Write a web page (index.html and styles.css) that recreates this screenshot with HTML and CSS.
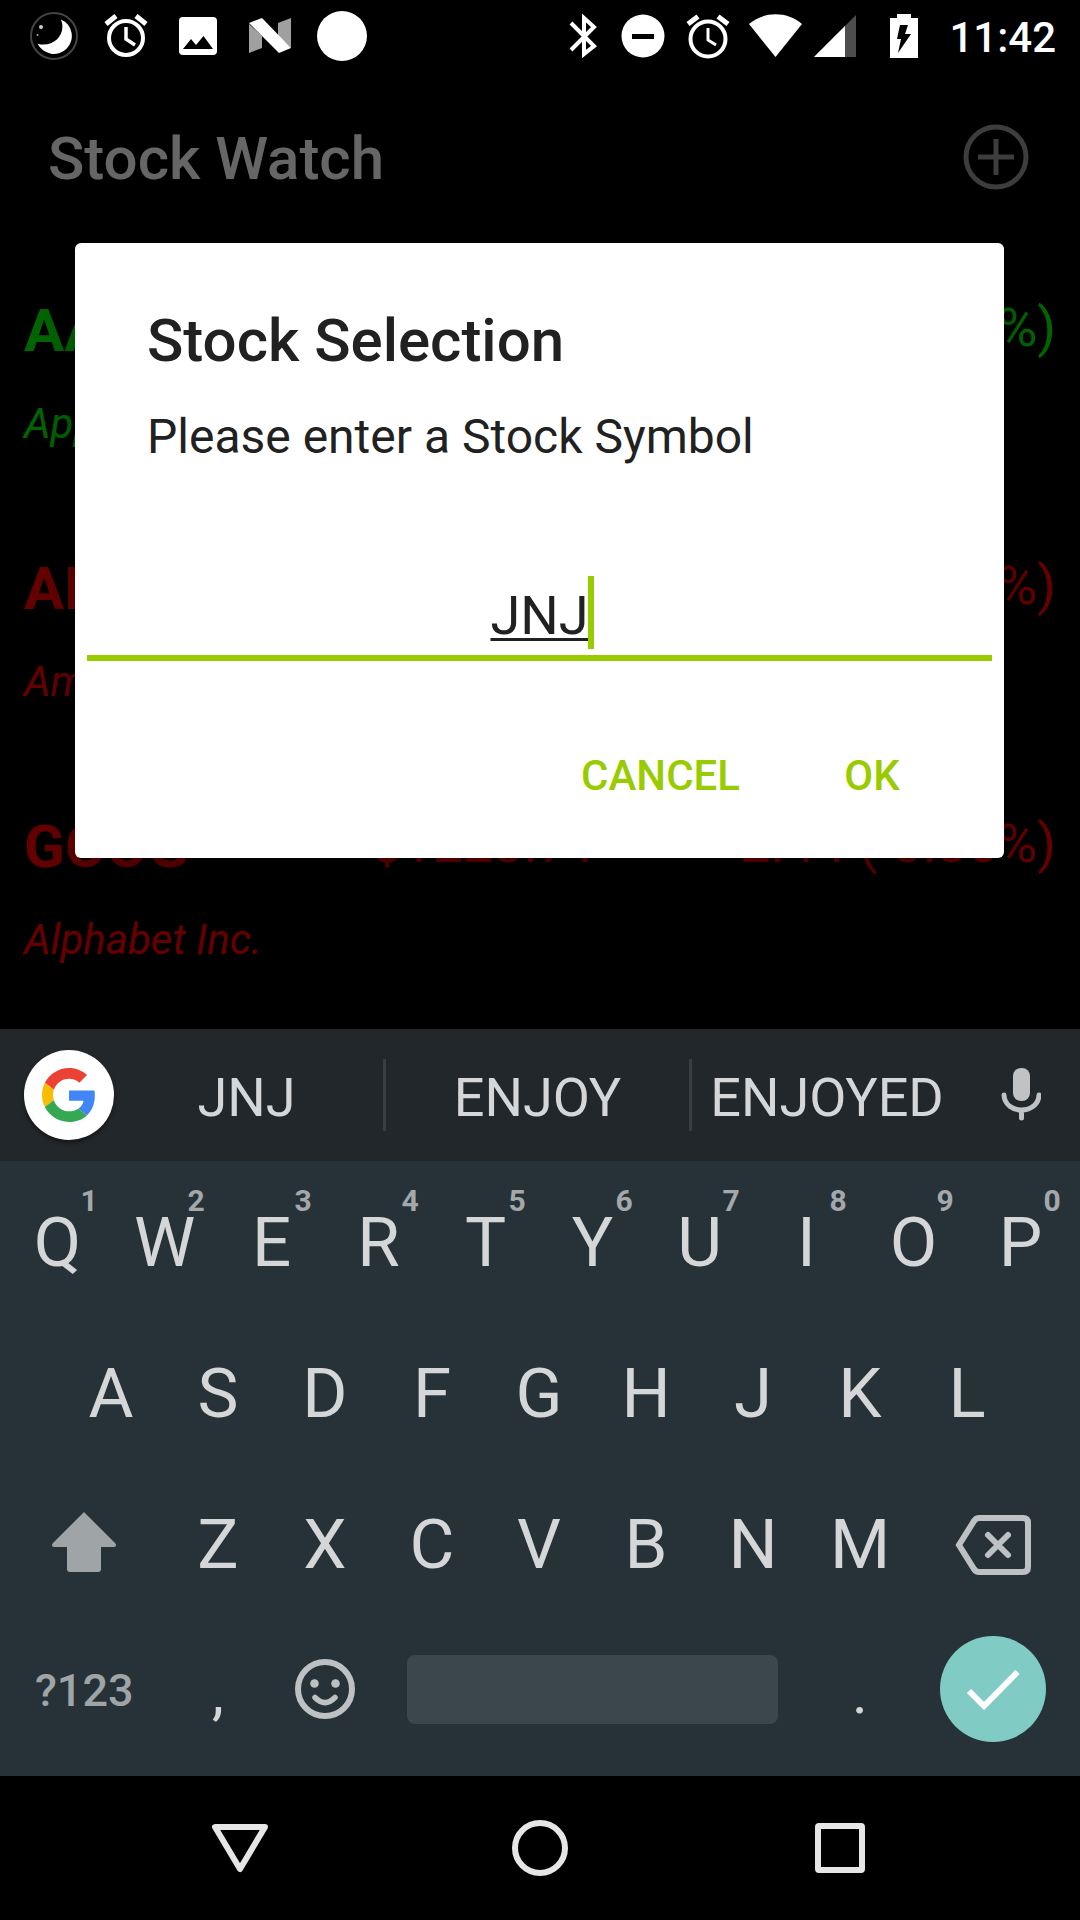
FILE: index.html
```html
<!DOCTYPE html>
<html lang="en">
<head>
<meta charset="utf-8">
<meta name="viewport" content="width=device-width, initial-scale=1">
<title>Stock Watch</title>
<link rel="stylesheet" href="styles.css">
</head>
<body>
<div class="screen">
  <header class="status">
    <div class="notifications">
      <svg width="50" height="50" viewBox="0 0 50 50"><circle cx="25" cy="25" r="23" fill="none" stroke="#444" stroke-width="2"/><path d="M32 8.400A18 18 0 1 1 8.600 32.700C24 37 38 24 32 8.400Z" fill="#fff"/><circle cx="12" cy="16" r="2" fill="#ccc"/><circle cx="8.500" cy="24" r="1" fill="#aaa"/></svg>
      <svg width="50" height="50" viewBox="0 0 50 50" fill="none" stroke="#fff"><circle cx="25" cy="27" r="17" stroke-width="4"/><path d="M25 16V28L34 34" stroke-width="3.500"/><path d="M5 13L15 5M45 13L35 5" stroke-width="5"/></svg>
      <svg width="50" height="50" viewBox="0 0 50 50"><rect x="6" y="6" width="38" height="38" rx="4" fill="#fff"/><path d="M10 38L18 28L23 34L30.500 25L40 38Z"/></svg>
      <svg width="50" height="50" viewBox="0 0 50 50"><path d="M4 13L17 25V37L4 42ZM46 7V37L33 25V12Z" fill="#a0a0a0"/><path d="M4 12L17 7L46 37L34 42Z" fill="#fff"/></svg>
      <svg width="50" height="50" viewBox="0 0 50 50"><circle cx="25" cy="25" r="25" fill="#fff"/></svg>
    </div>
    <div class="system">
      <svg width="56" height="72" viewBox="0 0 56 72" fill="none" stroke="#fff" stroke-width="4"><path d="M16 23L39 46L29 54V18L39 27L16 50"/></svg>
      <svg width="64" height="72" viewBox="0 0 64 72"><circle cx="32" cy="36" r="21.500" fill="#fff"/><path d="M21 36.500H43" stroke="#000" stroke-width="5"/></svg>
      <svg width="66" height="72" viewBox="0 0 66 72" fill="none" stroke="#fff"><circle cx="33" cy="39" r="17.500" stroke-width="4"/><path d="M33 28V40L41 45" stroke-width="3"/><path d="M13 24L23 16.500M53 24L43 16.500" stroke-width="5"/></svg>
      <svg width="68" height="72" viewBox="0 0 68 72"><path d="M8 24C23 11 46 11 61 24L34.500 57Z" fill="#fff"/></svg>
      <svg width="54" height="72" viewBox="0 0 54 72"><path d="M5 57L47 15V57Z" fill="#4d4d4d"/><path d="M5 57L36 26V57Z" fill="#fff"/></svg>
      <svg width="80" height="72" viewBox="0 0 80 72"><path d="M27 18H34V14H48V18H55V58H27Z" fill="#fff"/><path d="M37 25H45L42 34H48L35 53L38 39H34Z"/></svg>
      <time class="clock">11:42</time>
    </div>
  </header>

  <main class="app">
    <div class="app-bar">
      <h1>Stock Watch</h1>
      <button class="add" aria-label="Add stock"><svg width="66" height="66" viewBox="0 0 66 66" fill="none" stroke="#999" stroke-width="5"><circle cx="33" cy="33" r="30"/><path d="M33 15V51M15 33H51"/></svg></button>
    </div>
    <ul class="stocks">
      <li class="stock up"><b class="symbol">AAPL</b><span>$208.87</span><span>1.38 (0.67%)</span><i class="company">Apple Inc.</i></li>
      <li class="stock down"><b class="symbol">AMZN</b><span>$1886.52</span><span>-12.00 (-0.63%)</span><i class="company">Amazon.com Inc.</i></li>
      <li class="stock down"><b class="symbol">GOOG</b><span>$1223.71</span><span>-2.44 (-0.36%)</span><i class="company">Alphabet Inc.</i></li>
    </ul>

    <div class="scrim">
      <form class="dialog" role="dialog" aria-labelledby="dialog-title">
        <h2 id="dialog-title">Stock Selection</h2>
        <label for="symbol">Please enter a Stock Symbol</label>
        <div class="field">
          <input id="symbol" type="text" value="JNJ" autocomplete="off" spellcheck="false">
          <span class="caret"></span>
        </div>
        <div class="actions">
          <button type="button">CANCEL</button>
          <button type="button">OK</button>
        </div>
      </form>
    </div>
  </main>

  <section class="keyboard" aria-label="Keyboard">
    <div class="suggestions">
      <button class="google" aria-label="Google search"><svg width="54" height="54" viewBox="0 0 48 48"><path fill="#ea4335" d="M24 9.500c3.540 0 6.710 1.220 9.210 3.600l6.850-6.850C35.900 2.380 30.470 0 24 0 14.620 0 6.510 5.380 2.560 13.220l7.980 6.190C12.430 13.720 17.740 9.500 24 9.500z"/><path fill="#4285f4" d="M46.980 24.550c0-1.570-.15-3.090-.38-4.550H24v9.020h12.940c-.58 2.960-2.260 5.480-4.780 7.180l7.730 6c4.510-4.180 7.090-10.360 7.090-17.650z"/><path fill="#fbbc05" d="M10.530 28.590c-.48-1.450-.76-2.990-.76-4.590s.27-3.140.76-4.590l-7.980-6.190C.92 16.460 0 20.120 0 24c0 3.880.92 7.540 2.560 10.780l7.970-6.190z"/><path fill="#34a853" d="M24 48c6.480 0 11.930-2.130 15.890-5.810l-7.730-6c-2.150 1.450-4.920 2.300-8.160 2.300-6.260 0-11.570-4.220-13.470-9.910l-7.980 6.190C6.510 42.620 14.620 48 24 48z"/></svg></button>
      <button class="word word-first">JNJ</button>
      <button class="word word-middle">ENJOY</button>
      <button class="word">ENJOYED</button>
      <button class="mic" aria-label="Voice input"><svg width="40" height="54" viewBox="0 0 40 54"><rect x="12" y="0" width="17" height="33" rx="8" fill="#c0c2c3"/><path d="M3 27C4 47 37 47 38 27M20.500 42V50" fill="none" stroke="#c0c2c3" stroke-width="5" stroke-linecap="round"/></svg></button>
    </div>
    <div class="keys">
      <div class="row row-top">
        <button>Q<small>1</small></button><button>W<small>2</small></button><button>E<small>3</small></button><button>R<small>4</small></button><button>T<small>5</small></button><button>Y<small>6</small></button><button>U<small>7</small></button><button>I<small>8</small></button><button>O<small>9</small></button><button>P<small>0</small></button>
      </div>
      <div class="row row-home">
        <button>A</button><button>S</button><button>D</button><button>F</button><button>G</button><button>H</button><button>J</button><button>K</button><button>L</button>
      </div>
      <div class="row row-shift">
        <button aria-label="Shift"><svg width="64" height="66" viewBox="0 0 64 66"><path d="M32 0L63 31Q66 35 61 35H49V57Q49 60 46 60H18Q15 60 15 57V35H3Q-2 35 1 31Z" fill="#9fa4a6"/></svg></button>
        <button>Z</button><button>X</button><button>C</button><button>V</button><button>B</button><button>N</button><button>M</button>
        <button class="edge" aria-label="Backspace"><svg width="76" height="60" viewBox="0 0 76 60" fill="none" stroke="#bdc1c3" stroke-width="6"><path d="M24 3H68Q73 3 73 8V52Q73 57 68 57H24Q21 57 19 54L4 30L19 6Q21 3 24 3Z"/><path d="M33 20L53 40M53 20L33 40" stroke-linecap="round"/></svg></button>
      </div>
      <div class="row row-bottom">
        <button class="mode">?123</button>
        <button class="mark">,</button>
        <button aria-label="Emoji"><svg width="60" height="60" viewBox="0 0 60 60"><circle cx="30" cy="30" r="27" fill="none" stroke="#bdc1c3" stroke-width="6"/><circle cx="19.500" cy="24.500" r="4.300" fill="#bdc1c3"/><circle cx="40.500" cy="24.500" r="4.300" fill="#bdc1c3"/><path d="M20 38.500Q30 48.500 40 38.500" fill="none" stroke="#bdc1c3" stroke-width="5.500" stroke-linecap="round"/></svg></button>
        <button class="space" aria-label="Space"><span></span></button>
        <button class="mark">.</button>
        <button class="edge" aria-label="Done"><svg width="106" height="106" viewBox="0 0 106 106"><circle cx="53" cy="53" r="53" fill="#80cbc4"/><path d="M29 55L44 70L77.500 36" fill="none" stroke="#fff" stroke-width="6"/></svg></button>
      </div>
    </div>
  </section>

  <nav class="nav">
    <button aria-label="Back"><svg width="60" height="60" viewBox="0 0 60 60"><path d="M5 9H55L30 51Z" fill="none" stroke="#e6e6e6" stroke-width="6" stroke-linejoin="round"/></svg></button>
    <button aria-label="Home"><svg width="60" height="60" viewBox="0 0 60 60"><circle cx="30" cy="30" r="25" fill="none" stroke="#e6e6e6" stroke-width="6"/></svg></button>
    <button aria-label="Recent apps"><svg width="60" height="60" viewBox="0 0 60 60"><rect x="8" y="8" width="44" height="44" rx="1" fill="none" stroke="#e6e6e6" stroke-width="6"/></svg></button>
  </nav>
</div>
</body>
</html>
```
FILE: styles.css
```css
* { box-sizing: border-box; }

body {
  margin: 0;
  background: #000;
  font-family: Roboto, "Liberation Sans", sans-serif;
}

h1, h2 { margin: 0; font-size: 60px; line-height: 70px; font-weight: 500; }

button {
  margin: 0;
  padding: 0;
  border: 0;
  background: none;
  color: inherit;
  font: inherit;
}

svg { display: block; flex: none; }

.screen { display: flex; flex-direction: column; min-height: 100vh; }

/* Status bar */
.status {
  display: flex;
  justify-content: space-between;
  height: 72px;
  padding: 0 24px 0 29px;
  color: #fff;
}
.notifications { display: flex; align-items: center; gap: 22px; }
.system { display: flex; align-items: center; }
.clock { padding: 4px 0 0 6px; font-size: 42px; line-height: 50px; font-weight: 500; }

/* App */
.app { position: relative; flex: 1; }
.app-bar {
  display: flex;
  align-items: center;
  justify-content: space-between;
  height: 168px;
  padding: 2px 36px 0 48px;
  color: #fff;
}
.app-bar h1 { padding-top: 3px; }
.add { display: grid; place-items: center; width: 96px; height: 96px; }

.stocks { margin: 0; padding: 0; list-style: none; }
.stock {
  display: grid;
  grid-template-columns: 348px 1fr auto;
  row-gap: 33px;
  padding: 56px 24px 50px;
  font-size: 54px;
  line-height: 63px;
}
.symbol { font-size: 60px; line-height: 70px; }
.company { grid-column: 1 / -1; font-size: 42px; line-height: 49px; }
.up { color: #0f0; }
.down { color: #f00; }

/* Dialog */
.scrim {
  position: absolute;
  inset: 0;
  display: flex;
  align-items: center;
  padding: 0 76px 0 75px;
  background: rgba(0, 0, 0, .6);
}
.dialog {
  flex: 1;
  padding: 63px 12px 29px;
  border-radius: 6px;
  background: #fff;
  box-shadow: 0 24px 48px rgba(0, 0, 0, .3);
  color: #212121;
}
.dialog h2 { padding: 0 60px; }
.dialog label {
  display: block;
  margin-top: 33px;
  padding: 0 60px;
  font-size: 48px;
  line-height: 56px;
}
.field { position: relative; margin-top: 111px; }
.field input {
  display: block;
  width: 100%;
  height: 85px;
  padding: 0;
  border: 0;
  border-bottom: 6px solid #9c0;
  border-radius: 0;
  outline: 0;
  background: none;
  color: inherit;
  font: inherit;
  font-size: 54px;
  text-align: center;
  text-decoration: underline 3px;
  text-underline-offset: 4px;
  text-decoration-skip-ink: none;
}
.caret {
  position: absolute;
  top: 0;
  left: calc(50% + 48px);
  width: 6px;
  height: 73px;
  background: #9c0;
}
.actions {
  display: flex;
  justify-content: flex-end;
  margin-top: 60px;
  padding-right: 24px;
}
.actions button {
  min-width: 192px;
  height: 108px;
  padding: 0 36px;
  color: #9c0;
  font-size: 42px;
  font-weight: 500;
}

/* Keyboard */
.keyboard { background: #263238; color: #d4d6d8; }
.suggestions {
  display: grid;
  grid-template-columns: 114px 269fr 309fr 270fr 118px;
  align-items: center;
  height: 132px;
  background: #22272b;
}
.google {
  display: grid;
  place-items: center;
  width: 90px;
  height: 90px;
  margin-left: 24px;
  border-radius: 50%;
  background: #fff;
  box-shadow: 0 3px 4px rgba(0, 0, 0, .4);
}
.word { height: 72px; padding-top: 5px; font-size: 54px; line-height: 63px; }
.word-first { padding-right: 4px; }
.word-middle { border: solid #393e42; border-width: 0 3px; }
.mic { display: grid; place-items: center; }

.keys { padding: 6px 6px 18px 4px; }
.row { display: grid; height: 151px; }
.row button {
  position: relative;
  display: grid;
  place-items: center;
  font-size: 69px;
  line-height: 81px;
}
.row small {
  position: absolute;
  top: 16px;
  left: calc(50% + 23px);
  color: #a4a8ab;
  font-size: 30px;
  line-height: 35px;
  font-weight: 700;
}
.row-top { grid-template-columns: repeat(10, 1fr); }
.row-home { grid-template-columns: repeat(9, 1fr); padding: 0 5%; }
.row-shift { grid-template-columns: 3fr repeat(7, 2fr) 3fr; }
.row-bottom { grid-template-columns: 3fr 2fr 2fr 8fr 2fr 3fr; height: 138px; }
.row .mode { padding-top: 2px; color: #9fa4a6; font-size: 45px; font-weight: 500; }
.row .mark { padding-top: 6px; font-size: 60px; }
.row .edge { padding-right: 2px; }
.row .space { padding: 0 29px 0 28px; }
.space span { width: 100%; height: 69px; border-radius: 8px; background: #3c474c; }

/* Navigation bar */
.nav {
  display: grid;
  grid-template-columns: repeat(3, 1fr);
  height: 144px;
  padding: 0 90px;
}
.nav button { display: grid; place-items: center; }
```
